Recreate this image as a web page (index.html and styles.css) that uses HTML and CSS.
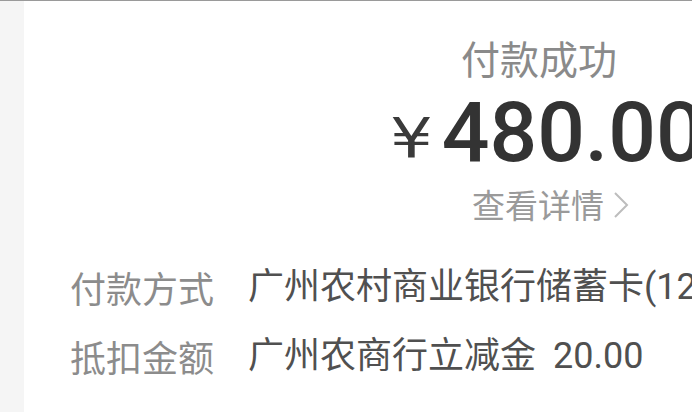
FILE: index.html
```html
<!DOCTYPE html>
<html lang="zh-CN">
<head>
<meta charset="utf-8">
<link rel="stylesheet" href="styles.css">
</head>
<body>
<div class="page">
  <div class="side"></div>
  <div class="main">
    <div class="status">付款成功</div>
    <div class="amount"><span class="yen">¥</span><span class="num">480.00</span></div>
    <div class="detail"><span>查看详情</span><svg class="chev" width="18" height="28" viewBox="0 0 18 28"><polyline points="3,2 15,14 3,26" fill="none" stroke="#bdbdbd" stroke-width="2"/></svg></div>
    <div class="info">
      <div class="row"><span class="label">付款方式</span><span class="value">广州农村商业银行储蓄卡(1234)</span></div>
      <div class="row"><span class="label">抵扣金额</span><span class="value">广州农商行立减金 <span class="figure">20.00</span></span></div>
    </div>
  </div>
</div>
</body>
</html>
```

FILE: styles.css
```css
html, body {
  margin: 0;
  padding: 0;
  background: #ffffff;
}
body {
  width: 692px;
  height: 412px;
  overflow: hidden;
  font-family: Roboto, "Noto Sans CJK SC", sans-serif;
}
.page {
  display: flex;
  height: 411px;
  border-top: 1px solid #9a9a9a;
  overflow: hidden;
}
.side {
  width: 24px;
  flex: none;
  background: #f5f5f5;
}
.main {
  flex: 1;
  min-width: 0;
  overflow: hidden;
  white-space: nowrap;
}
.status {
  margin-top: 37px;
  padding-left: 437px;
  font-size: 39px;
  line-height: 39px;
  color: #8a8a8a;
  font-family: "Noto Sans CJK SC", sans-serif;
}
.amount {
  margin-top: 14px;
  padding-left: 366px;
  display: flex;
  align-items: flex-start;
  height: 84px;
}
.yen {
  font-family: "DejaVu Sans", sans-serif;
  font-size: 56px;
  line-height: 56px;
  color: #3a3a3a;
  margin-top: 19px;
  margin-right: 16px;
  transform: scaleX(1.2);
  transform-origin: left center;
}
.num {
  font-family: Roboto, sans-serif;
  font-weight: 500;
  font-size: 84px;
  line-height: 84px;
  color: #333333;
}
.detail {
  margin-top: 13px;
  padding-left: 448px;
  display: flex;
  align-items: center;
  font-family: "Noto Sans CJK SC", sans-serif;
  font-size: 33px;
  line-height: 33px;
  color: #9a9a9a;
}
.chev {
  margin-left: 8px;
}
.info {
  margin-top: 48px;
  padding-left: 46px;
  display: flex;
  flex-direction: column;
  gap: 33px;
}
.row {
  display: flex;
  font-family: "Noto Sans CJK SC", sans-serif;
  font-size: 36px;
  line-height: 36px;
}
.label {
  width: 178px;
  flex: none;
  color: #8c8c8c;
}
.value {
  color: #505050;
  font-family: Roboto, "Noto Sans CJK SC", sans-serif;
}
.figure {
  margin-left: 8px;
}
```
